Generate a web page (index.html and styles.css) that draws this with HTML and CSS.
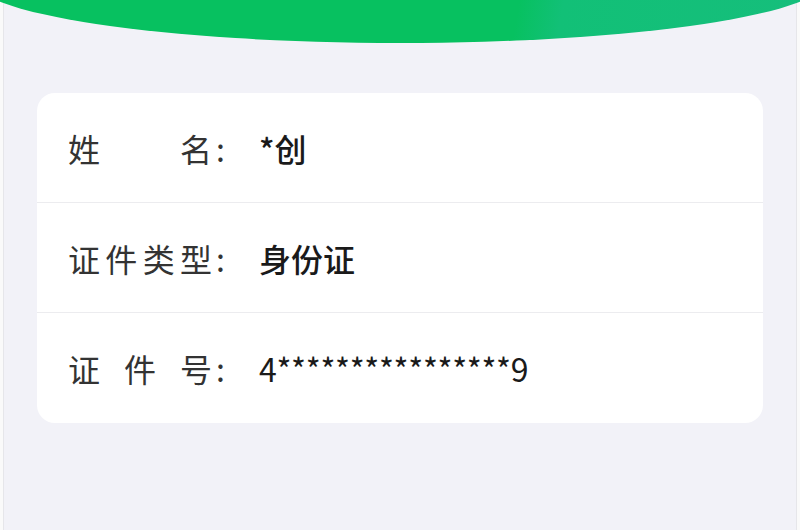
FILE: index.html
```html
<!DOCTYPE html>
<html lang="zh-CN">
<head>
  <meta charset="UTF-8">
  <meta name="viewport" content="width=device-width, initial-scale=1.0">
  <title>实名信息</title>
  <link rel="stylesheet" href="styles.css">
</head>
<body>
  <div class="page">
    <div class="banner"></div>

    <div class="card">
      <div class="row">
        <span class="label">姓名</span><span class="colon">:</span>
        <span class="value">*创</span>
      </div>
      <div class="row">
        <span class="label">证件类型</span><span class="colon">:</span>
        <span class="value">身份证</span>
      </div>
      <div class="row">
        <span class="label">证件号</span><span class="colon">:</span>
        <span class="value id-number">4****************9</span>
      </div>
    </div>
  </div>
</body>
</html>
```

FILE: styles.css
```css
html, body {
  margin: 0;
  height: 100%;
  overflow: hidden;
}
body {
  font-family: "Noto Sans CJK SC", "Noto Sans", sans-serif;
  background-color: #fafafa;
}
.page {
  display: flow-root;
  margin: 0 3px;
  height: 530px;
  border-left: 1px solid #e6e6ea;
  border-right: 1px solid #e6e6ea;
  background-color: #f2f2f8;
}
/* green arc at the top */
.banner {
  width: 860px;
  height: 130px;
  margin: -87px 0 0 -34px;
  border-radius: 50%;
  background: linear-gradient(100deg, #07c160 0%, #07c160 64%, #12c077 69%, #16be7c 100%);
}
.card {
  margin: 50px 33px 0;
  background-color: #fff;
  border-radius: 18px;
}
.row {
  display: flex;
  align-items: center;
  height: 110px;
  padding-left: 31px;
  border-bottom: 1px solid #ececef;
  font-size: 32px;
  box-sizing: border-box;
}
.row:last-child {
  border-bottom: none;
}
.label {
  width: 144px;
  text-align: justify;
  text-align-last: justify;
  color: #333;
}
.colon {
  width: 43px;
  padding-left: 4px;
  color: #333;
}
.value {
  color: #1a1a1a;
  font-weight: 500;
}
.id-number {
  font-weight: 400;
  letter-spacing: -0.3px;
}
```
